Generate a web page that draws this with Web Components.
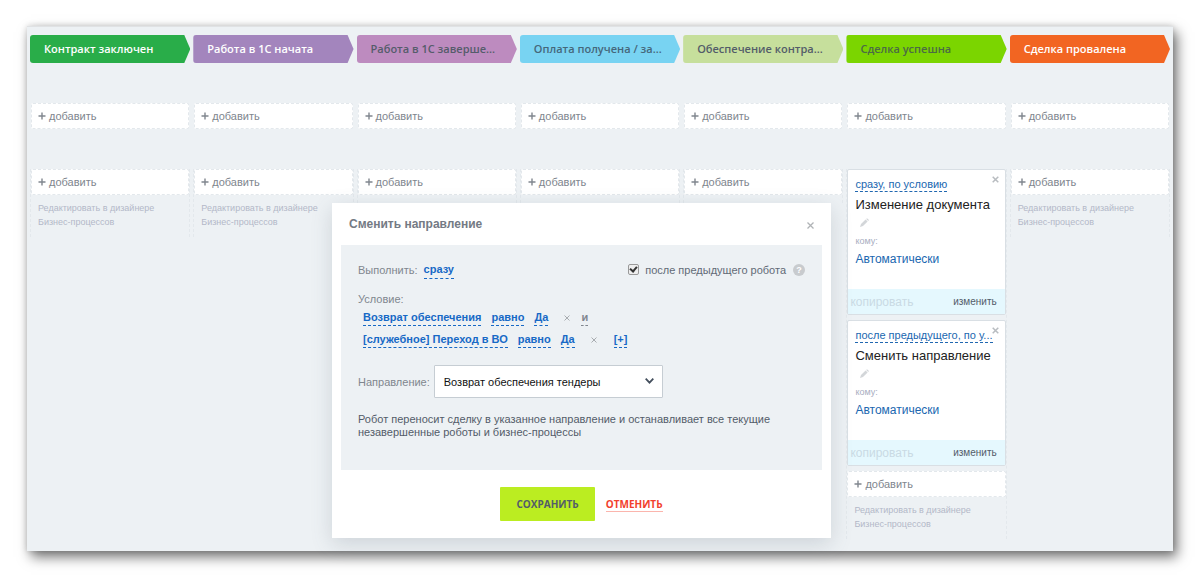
<!DOCTYPE html>
<html lang="ru">
<head>
<meta charset="utf-8">
<meta name="viewport" content="width=device-width, initial-scale=1">
<title>Роботы</title>
<style>
	body {
		margin: 0;
		padding: 26px 27px 28px;
		background: #fff;
		font: 11px/14px "Liberation Sans", Arial, sans-serif;
	}
</style>
</head>
<body>
<robot-board>
	<stage-column name="Контракт заключен" designer style="--stage: #29ad49"></stage-column>
	<stage-column name="Работа в 1С начата" designer style="--stage: #a385bd"></stage-column>
	<stage-column name="Работа в 1С заверше..." style="--stage: #bd8bbf; --stage-text: #545c6a"></stage-column>
	<stage-column name="Оплата получена / за..." style="--stage: #78d3f2; --stage-text: #45677a"></stage-column>
	<stage-column name="Обеспечение контра..." style="--stage: #c6df9c; --stage-text: #535c69"></stage-column>
	<stage-column name="Сделка успешна" designer style="--stage: #7bd500; --stage-text: #4b6b45">
		<robot-card when="сразу, по условию" who="Автоматически">Изменение документа</robot-card>
		<robot-card when="после предыдущего, по у..." who="Автоматически">Сменить направление</robot-card>
	</stage-column>
	<stage-column name="Сделка провалена" designer style="--stage: #f26522"></stage-column>
	<robot-dialog slot="dialog" heading="Сменить направление">
		<condition-row field="Возврат обеспечения" value="Да" joiner="и"></condition-row>
		<condition-row field="[служебное] Переход в ВО" value="Да"></condition-row>
		<span slot="note">Робот переносит сделку в указанное направление и останавливает все текущие незавершенные роботы и бизнес-процессы</span>
	</robot-dialog>
</robot-board>

<script>
class RobotBoard extends HTMLElement {
	constructor() {
		super();

		const shadowRoot = this.attachShadow({ mode: 'open' });
		shadowRoot.innerHTML = /*html*/`
			<style>
				:host {
					display: block;
					position: relative;
					box-sizing: border-box;
					min-height: 525px;
					padding: 8px 3px 0;
					background: #edf1f4;
					border-top: 1px solid #e0e2e4;
					box-shadow: 4px 6px 12px rgba(0, 0, 0, .55), 0 0 6px rgba(0, 0, 0, .15);
				}
				main {
					display: grid;
					grid-template-columns: repeat(7, minmax(0, 1fr));
					gap: 3px;
				}
			</style>
			<main><slot></slot></main>
			<slot name="dialog"></slot>
		`;
	}
}

class AddButton extends HTMLElement {
	constructor() {
		super();

		const shadowRoot = this.attachShadow({ mode: 'open' });
		shadowRoot.innerHTML = /*html*/`
			<style>
				:host {
					display: block;
				}
				button {
					display: flex;
					align-items: center;
					gap: 3px;
					box-sizing: border-box;
					width: 100%;
					height: 26px;
					padding: 0 6px;
					background: #fff;
					border: 1px dashed #e3e8ec;
					border-radius: 2px;
					color: #80868e;
					font: inherit;
					text-align: left;
				}
				svg {
					width: 8px;
					height: 8px;
				}
			</style>
			<button type="button">
				<svg viewBox="0 0 8 8" aria-hidden="true"><path d="M4 .5v7M.5 4h7" stroke="#80868e" stroke-width="1.4"/></svg>
				<slot></slot>
			</button>
		`;
	}
}

class StageColumn extends HTMLElement {
	constructor() {
		super();

		const shadowRoot = this.attachShadow({ mode: 'open' });
		shadowRoot.innerHTML = /*html*/`
			<style>
				:host {
					display: block;
				}
				h2 {
					box-sizing: border-box;
					height: 28px;
					margin: 0;
					padding: 0 16px 0 14px;
					background: var(--stage);
					border-radius: 3px;
					clip-path: polygon(0 0, calc(100% - 6px) 0, 100% 50%, calc(100% - 6px) 100%, 0 100%);
					color: var(--stage-text, #fff);
					font: 600 11px/28px "Open Sans", sans-serif;
					white-space: nowrap;
					overflow: hidden;
				}
				.triggers {
					padding: 40px 1px;
				}
				.robots {
					display: flex;
					flex-direction: column;
					gap: 5px;
					padding: 0 0 8px;
					border: 1px dashed #e3e8ec;
					border-width: 0 1px;
				}
				a {
					display: block;
					padding: 1px 7px 0;
					color: #b3b8c8;
					font-size: 9px;
					line-height: 14px;
					text-decoration: none;
				}
			</style>
			<h2></h2>
			<div class="triggers"><add-button>добавить</add-button></div>
			<div class="robots">
				<slot></slot>
				<add-button>добавить</add-button>
			</div>
		`;
		this.header = shadowRoot.querySelector('h2');
		this.robots = shadowRoot.querySelector('.robots');
	}

	connectedCallback() {
		this.header.textContent = this.getAttribute('name');

		if (this.hasAttribute('designer')) {
			this.robots.insertAdjacentHTML('beforeend', '<a href="#">Редактировать в дизайнере<br>Бизнес-процессов</a>');
		}
	}
}

class RobotCard extends HTMLElement {
	constructor() {
		super();

		const shadowRoot = this.attachShadow({ mode: 'open' });
		shadowRoot.innerHTML = /*html*/`
			<style>
				:host {
					display: block;
					position: relative;
					background: #fff;
					border: 1px solid #d9dfe4;
					border-radius: 2px;
					box-sizing: border-box;
					height: 146px;
				}
				article {
					display: flex;
					flex-direction: column;
					height: 100%;
				}
				.body {
					flex: 1;
					padding: 7px 7px 0;
				}
				a {
					color: #2067b0;
					text-decoration: none;
				}
				.when {
					display: inline-block;
					font-size: 11px;
					line-height: 13px;
					border-bottom: 1px dashed #2067b0;
					white-space: nowrap;
				}
				h3 {
					margin: 5px 0 0;
					color: #222;
					font-size: 13px;
					font-weight: normal;
					line-height: 16px;
					white-space: nowrap;
				}
				button {
					display: block;
					padding: 0;
					background: none;
					border: 0;
					font: inherit;
				}
				button svg {
					display: block;
				}
				.rename {
					margin: 5px 0 0 5px;
				}
				.label {
					margin-top: 8px;
					color: #a8adbf;
					font-size: 9px;
					line-height: 12px;
				}
				.who {
					display: inline-block;
					margin-top: 4px;
					font-size: 12px;
					line-height: 16px;
				}
				.close {
					position: absolute;
					top: 6px;
					right: 6px;
				}
				footer {
					display: flex;
					align-items: center;
					justify-content: space-between;
					height: 25px;
					padding: 0 8px 0 2px;
					background: #e5f8fe;
				}
				.copy {
					color: #c9dae4;
					font-size: 12px;
				}
				.edit {
					color: #535c69;
					font-size: 10px;
				}
			</style>
			<article>
				<div class="body">
					<a class="when" href="#"></a>
					<h3><slot></slot></h3>
					<button class="rename" type="button" aria-label="Переименовать">
						<svg width="9" height="9" viewBox="0 0 9 9"><path d="M0 9l1-3 4.600-4.500 2 2L3 8zM6.200 1l.8-.8L9 2l-.8.9z" fill="#d3d6d9"/></svg>
					</button>
					<div class="label">кому:</div>
					<a class="who" href="#"></a>
				</div>
				<button class="close" type="button" aria-label="Удалить">
					<svg width="7" height="7" viewBox="0 0 7 7"><path d="M.7.7l5.600 5.600M6.300.7L.7 6.300" stroke="#b8bcc0" stroke-width="1.500"/></svg>
				</button>
				<footer>
					<button class="copy" type="button">копировать</button>
					<button class="edit" type="button">изменить</button>
				</footer>
			</article>
		`;
		this.when = shadowRoot.querySelector('.when');
		this.who = shadowRoot.querySelector('.who');
	}

	connectedCallback() {
		this.when.textContent = this.getAttribute('when');
		this.who.textContent = this.getAttribute('who');
	}
}

class ConditionRow extends HTMLElement {
	constructor() {
		super();

		const shadowRoot = this.attachShadow({ mode: 'open' });
		shadowRoot.innerHTML = /*html*/`
			<style>
				:host {
					display: flex;
					gap: 10px;
					height: 22px;
					padding-left: 5px;
					font-weight: bold;
				}
				a {
					height: 15px;
					line-height: 15px;
					border-bottom: 1px dashed;
					color: #1769c6;
					text-decoration: none;
				}
				a.joiner {
					color: #80868e;
				}
				a.more {
					margin-left: 6px;
				}
				button {
					height: 16px;
					margin: 0 1px 0 6px;
					padding: 0;
					background: none;
					border: 0;
				}
				svg {
					display: block;
				}
			</style>
			<a class="field" href="#"></a>
			<a href="#">равно</a>
			<a class="value" href="#"></a>
			<button type="button" aria-label="Удалить условие">
				<svg width="6" height="6" viewBox="0 0 6 6"><path d="M.5.5l5 5M5.500.5l-5 5" stroke="#a8acb0"/></svg>
			</button>
			<a class="joiner" href="#"></a>
			<a class="more" href="#">[+]</a>
		`;
		this.container = shadowRoot;
	}

	connectedCallback() {
		const joiner = this.getAttribute('joiner');
		this.container.querySelector('.field').textContent = this.getAttribute('field');
		this.container.querySelector('.value').textContent = this.getAttribute('value');
		this.container.querySelector('.joiner').textContent = joiner;
		this.container.querySelector(joiner ? '.more' : '.joiner').remove();
	}
}

class RobotDialog extends HTMLElement {
	constructor() {
		super();

		const shadowRoot = this.attachShadow({ mode: 'open' });
		shadowRoot.innerHTML = /*html*/`
			<style>
				:host {
					display: block;
					position: absolute;
					top: 176px;
					left: 305px;
					box-sizing: border-box;
					width: 499px;
					padding: 0 9px 17px;
					background: #fff;
					box-shadow: 0 6px 20px rgba(80, 95, 110, .2);
					color: #80868e;
				}
				header {
					display: flex;
					align-items: center;
					justify-content: space-between;
					height: 42px;
					padding: 0 8px;
				}
				h1 {
					margin: 0;
					color: #747a84;
					font-size: 12px;
				}
				button {
					padding: 0;
					border: 0;
					background: none;
				}
				form {
					box-sizing: border-box;
					min-height: 225px;
					padding: 16px 17px;
					background: #edf1f4;
				}
				.run {
					display: flex;
					align-items: center;
					height: 17px;
				}
				.run a {
					margin-left: 6px;
					border-bottom: 1px dashed;
					color: #1769c6;
					font-weight: bold;
					line-height: 17px;
					text-decoration: none;
				}
				.run input {
					appearance: none;
					box-sizing: border-box;
					width: 11px;
					height: 11px;
					margin: 0 6px 0 auto;
					background: #eee;
					border: 1px solid #999;
					border-radius: 2px;
				}
				.run input:checked::after {
					content: "";
					display: block;
					width: 3px;
					height: 5px;
					margin: 0 auto;
					border: solid #333;
					border-width: 0 2px 2px 0;
					transform: rotate(40deg);
				}
				.run label {
					color: #626a76;
				}
				.help {
					width: 12px;
					height: 12px;
					margin-left: 7px;
					background: #c8cbce;
					border-radius: 50%;
					color: #fff;
					font: bold 9px/12px "Liberation Sans", sans-serif;
				}
				.conditions {
					margin: 13px 0 11px;
				}
				.caption {
					padding-bottom: 3px;
					line-height: 16px;
				}
				.direction {
					display: flex;
					align-items: center;
					gap: 4px;
				}
				.select {
					position: relative;
					flex: 0 0 229px;
				}
				select {
					appearance: none;
					box-sizing: border-box;
					width: 100%;
					height: 33px;
					padding: 0 30px 0 9px;
					background: #fff;
					border: 1px solid #c6cdd3;
					border-radius: 1px;
					color: #111;
					font: inherit;
				}
				.select svg {
					position: absolute;
					top: 13px;
					right: 9px;
					pointer-events: none;
				}
				p {
					margin: 15px 0 0;
					padding-right: 20px;
					color: #535c69;
					line-height: 13px;
				}
				footer {
					display: flex;
					align-items: center;
					justify-content: center;
					gap: 11px;
					padding-top: 17px;
				}
				footer button {
					font: bold 10px/16px "Open Sans", sans-serif;
				}
				.save {
					height: 34px;
					padding: 0 16px;
					background: #bbed21;
					border-radius: 1px;
					color: #535c69;
				}
				.cancel {
					border-bottom: 1px solid #fbb5ad;
					color: #f23f2d;
					line-height: 14px;
				}
			</style>
			<header>
				<h1></h1>
				<button type="button" aria-label="Закрыть">
					<svg width="7" height="7" viewBox="0 0 7 7"><path d="M.5.5l6 6M6.500.5l-6 6" stroke="#b0b3b6" stroke-width="1.300"/></svg>
				</button>
			</header>
			<form>
				<div class="run">
					Выполнить: <a href="#">сразу</a>
					<input type="checkbox" id="after" checked>
					<label for="after">после предыдущего робота</label>
					<button class="help" type="button">?</button>
				</div>
				<div class="conditions">
					<div class="caption">Условие:</div>
					<slot></slot>
				</div>
				<div class="direction">
					<label for="direction">Направление:</label>
					<div class="select">
						<select id="direction"><option>Возврат обеспечения тендеры</option></select>
						<svg width="9" height="6" viewBox="0 0 9 6"><path d="M.7.7l3.800 3.900L8.300.7" fill="none" stroke="#434e5c" stroke-width="1.800"/></svg>
					</div>
				</div>
				<p><slot name="note"></slot></p>
			</form>
			<footer>
				<button class="save" type="button">СОХРАНИТЬ</button>
				<button class="cancel" type="button">ОТМЕНИТЬ</button>
			</footer>
		`;
		this.heading = shadowRoot.querySelector('h1');
	}

	connectedCallback() {
		this.heading.textContent = this.getAttribute('heading');
	}
}

customElements.define('robot-board', RobotBoard);
customElements.define('add-button', AddButton);
customElements.define('stage-column', StageColumn);
customElements.define('robot-card', RobotCard);
customElements.define('condition-row', ConditionRow);
customElements.define('robot-dialog', RobotDialog);
</script>
</body>
</html>
